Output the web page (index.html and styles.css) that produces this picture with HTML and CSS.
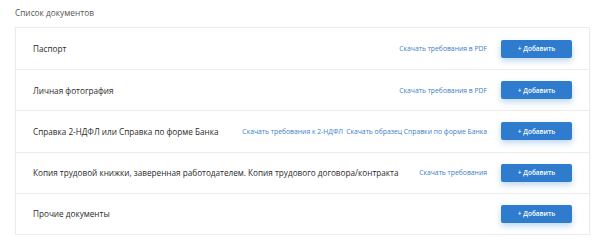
FILE: index.html
```html
<!DOCTYPE html>
<html>
  <head>
    <meta charset="utf-8">
    <title>Список документов</title>
    <link rel="stylesheet" href="styles.css">
  </head>
  <body>
    <div class="docs">
      <div class="docs-title">Список документов</div>
      <ul class="doc-list">
        <li class="doc">
          <span class="doc-name">Паспорт</span>
          <div class="doc-links">
            <a href="#">Скачать требования в PDF</a>
          </div>
          <button class="add-btn">+ Добавить</button>
        </li>
        <li class="doc">
          <span class="doc-name">Личная фотография</span>
          <div class="doc-links">
            <a href="#">Скачать требования в PDF</a>
          </div>
          <button class="add-btn">+ Добавить</button>
        </li>
        <li class="doc">
          <span class="doc-name">Справка 2-НДФЛ или Справка по форме Банка</span>
          <div class="doc-links">
            <a href="#">Скачать требования к 2-НДФЛ</a>
            <a href="#">Скачать образец Справки по форме Банка</a>
          </div>
          <button class="add-btn">+ Добавить</button>
        </li>
        <li class="doc">
          <span class="doc-name">Копия трудовой книжки, заверенная работодателем. Копия трудового договора/контракта</span>
          <div class="doc-links">
            <a href="#">Скачать требования</a>
          </div>
          <button class="add-btn">+ Добавить</button>
        </li>
        <li class="doc">
          <span class="doc-name">Прочие документы</span>
          <div class="doc-links"></div>
          <button class="add-btn">+ Добавить</button>
        </li>
      </ul>
    </div>
  </body>
</html>
```
FILE: styles.css
```css
:root {
  --text-color: #2b2b2b;
  --muted-color: #555;
  --link-color: #3b80c6;
  --btn-color: #2f7ccf;
  --line-color: #ececec;
}

* {
  box-sizing: border-box;
}

body {
  margin: 0;
  background: #fff;
  font-family: "Open Sans", sans-serif;
  color: var(--text-color);
}

ul {
  margin: 0;
  padding: 0;
  list-style: none;
}

.docs {
  padding: 6px 10px 0 15px;
}

.docs-title {
  font-size: 8.3px;
  color: var(--muted-color);
  height: 21px;
  line-height: 14px;
}

/*----- LIST -----*/

.doc-list {
  border: 1px solid var(--line-color);
  box-shadow: 0 1px 3px rgba(0,0,0,0.04);
}

.doc {
  display: flex;
  align-items: center;
  height: 41.2px;
  padding: 0 17px 0 17px;
  border-top: 1px solid var(--line-color);
}

.doc:first-child {
  border-top: none;
}

.doc-name {
  font-size: 8.2px;
  flex: 1 1 auto;
  white-space: nowrap;
}

.doc-links {
  display: flex;
  gap: 3px;
  margin-right: 14px;
}

.doc-links a {
  font-size: 6.8px;
  color: var(--link-color);
  text-decoration: none;
  white-space: nowrap;
}

.add-btn {
  flex: 0 0 auto;
  width: 71px;
  height: 18px;
  border: none;
  border-radius: 2px;
  background: var(--btn-color);
  color: #fff;
  font-family: inherit;
  font-size: 6.5px;
  font-weight: 600;
  padding: 0;
  box-shadow: 0 3px 6px rgba(47,124,207,0.3);
}
```
